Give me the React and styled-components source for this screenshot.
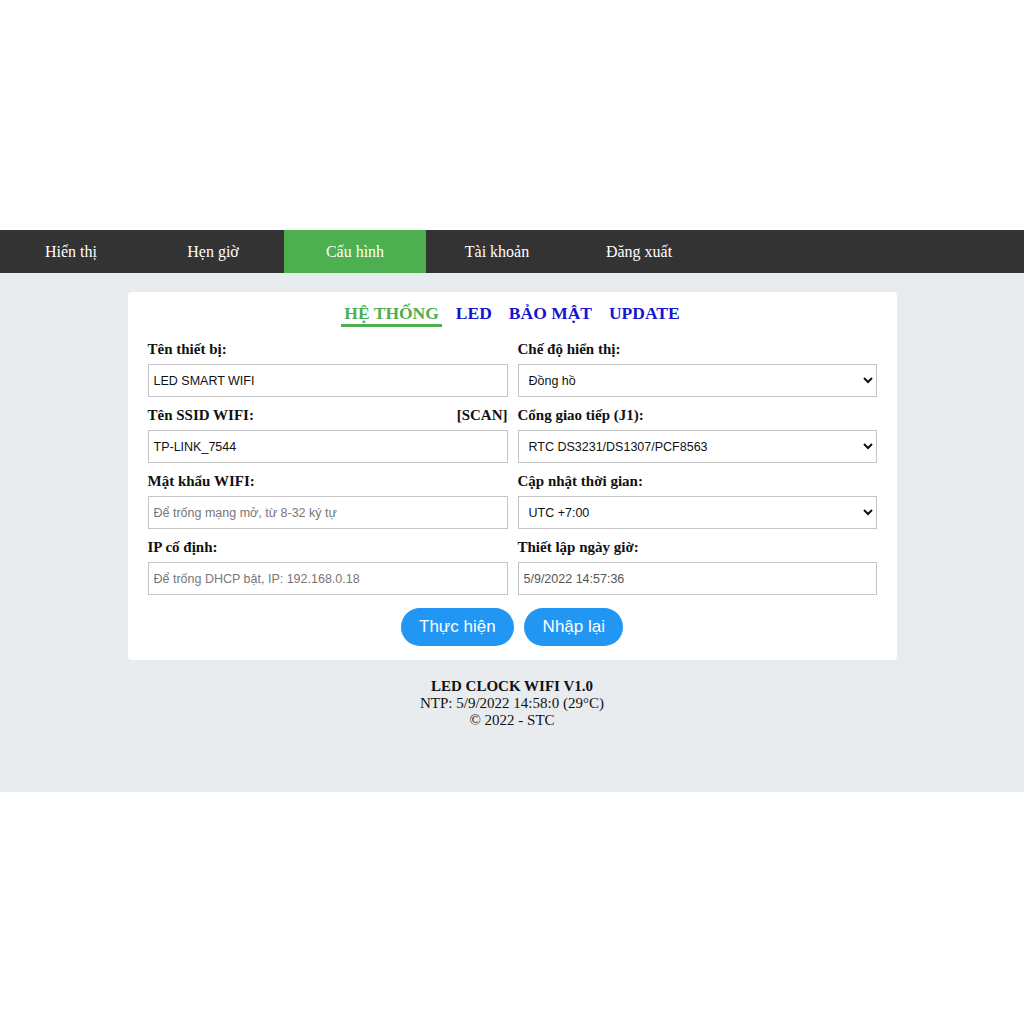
import styled, { createGlobalStyle } from 'styled-components'

const GlobalStyle = createGlobalStyle`
    * {
        box-sizing: border-box;
    }
    body {
        margin: 0;
        background: white;
        font-family: "Liberation Serif", "Times New Roman", serif;
    }
`

const Page = styled.div`
    padding-top: 230px;
`

const NavBar = styled.nav`
    display: flex;
    height: 43px;
    background: #333;
`

const NavItem = styled.a`
    width: 142px;
    display: flex;
    align-items: center;
    justify-content: center;
    color: white;
    font-size: 16px;
    text-decoration: none;
    background: ${props => props.active ? '#4caf50' : 'transparent'};
`

const Main = styled.main`
    background: #e9ecef;
    padding: 19px 0 63px;
`

const Card = styled.div`
    width: 769px;
    margin: 0 auto;
    background: white;
    border-radius: 4px;
    padding: 10px 20px 14px;
`

const Tabs = styled.div`
    display: flex;
    justify-content: center;
    gap: 11px;
    margin-bottom: 13px;
`

const Tab = styled.a`
    font-size: 17.5px;
    line-height: 22px;
    font-weight: bold;
    padding: 0 3px;
    color: ${props => props.active ? '#4caf50' : '#1414d2'};
    border-bottom: 3px solid ${props => props.active ? '#4caf50' : 'transparent'};
    text-decoration: none;
`

const Grid = styled.div`
    display: grid;
    grid-template-columns: 360px 359px;
    column-gap: 10px;
    row-gap: 9px;
`

const Field = styled.div`
    display: flex;
    flex-direction: column;
    gap: 6px;
`

const Label = styled.label`
    display: flex;
    justify-content: space-between;
    font-size: 15px;
    line-height: 18px;
    font-weight: bold;
    color: #111;
`

const Input = styled.input`
    height: 33px;
    border: 1px solid #c4c4c4;
    padding: 0 5px;
    font-family: "Liberation Sans", Arial, sans-serif;
    font-size: 12.5px;
    color: ${props => props.muted ? '#555' : '#111'};
    outline: none;

    &::placeholder {
        color: #777;
    }
`

const Select = styled.select`
    height: 33px;
    border: 1px solid #c4c4c4;
    padding: 0 6px;
    background: white;
    font-family: "Liberation Sans", Arial, sans-serif;
    font-size: 12.5px;
    color: #111;
    outline: none;
`

const Actions = styled.div`
    display: flex;
    justify-content: center;
    gap: 10px;
    margin-top: 13px;
`

const Button = styled.button`
    height: 38px;
    padding: 0 18.5px;
    border: none;
    border-radius: 19px;
    background: #2196f3;
    color: white;
    font-family: "Liberation Sans", Arial, sans-serif;
    font-size: 17px;
`

const Footer = styled.footer`
    margin-top: 18px;
    text-align: center;
    font-size: 15px;
    line-height: 17px;
    color: #111;
`

const fields = [
    { label: 'Tên thiết bị:', value: 'LED SMART WIFI' },
    { label: 'Chế độ hiển thị:', options: ['Đồng hồ'] },
    { label: 'Tên SSID WIFI:', extra: '[SCAN]', value: 'TP-LINK_7544' },
    { label: 'Cổng giao tiếp (J1):', options: ['RTC DS3231/DS1307/PCF8563'] },
    { label: 'Mật khẩu WIFI:', placeholder: 'Để trống mạng mở, từ 8-32 ký tự' },
    { label: 'Cập nhật thời gian:', options: ['UTC +7:00'] },
    { label: 'IP cố định:', placeholder: 'Để trống DHCP bật, IP: 192.168.0.18' },
    { label: 'Thiết lập ngày giờ:', value: '5/9/2022 14:57:36', muted: true },
]

const navItems = ['Hiển thị', 'Hẹn giờ', 'Cấu hình', 'Tài khoản', 'Đăng xuất']
const tabs = ['HỆ THỐNG', 'LED', 'BẢO MẬT', 'UPDATE']

export default function App() {
    return (
        <Page>
            <GlobalStyle />

            <NavBar>
                {navItems.map(item => (
                    <NavItem key={item} active={item === 'Cấu hình'}>{item}</NavItem>
                ))}
            </NavBar>

            <Main>
                <Card>
                    <Tabs>
                        {tabs.map(tab => (
                            <Tab key={tab} active={tab === 'HỆ THỐNG'}>{tab}</Tab>
                        ))}
                    </Tabs>

                    <Grid>
                        {fields.map(f => (
                            <Field key={f.label}>
                                <Label>
                                    <span>{f.label}</span>
                                    {f.extra && <span>{f.extra}</span>}
                                </Label>
                                {f.options ? (
                                    <Select defaultValue={f.options[0]}>
                                        {f.options.map(o => <option key={o}>{o}</option>)}
                                    </Select>
                                ) : (
                                    <Input defaultValue={f.value} placeholder={f.placeholder} muted={f.muted} />
                                )}
                            </Field>
                        ))}
                    </Grid>

                    <Actions>
                        <Button>Thực hiện</Button>
                        <Button>Nhập lại</Button>
                    </Actions>
                </Card>

                <Footer>
                    <b>LED CLOCK WIFI V1.0</b><br />
                    NTP: 5/9/2022 14:58:0 (29°C)<br />
                    © 2022 - STC
                </Footer>
            </Main>
        </Page>
    )
}
